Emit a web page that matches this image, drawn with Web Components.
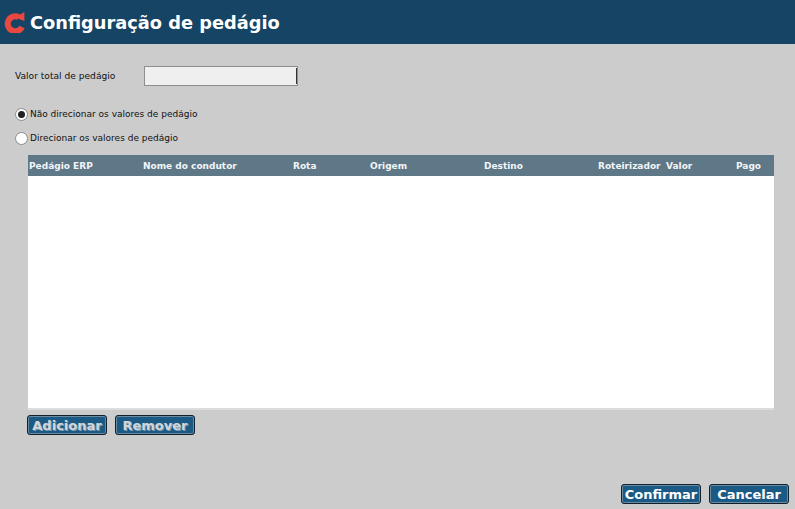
<!DOCTYPE html>
<html lang="pt">
<head>
<meta charset="utf-8">
<title>Configuração de pedágio</title>
<style>
    html, body { margin: 0; padding: 0; }
    body {
        width: 795px;
        height: 509px;
        overflow: hidden;
        background: #cccccc;
        font-family: "DejaVu Sans", Verdana, sans-serif;
        display: flex;
        flex-direction: column;
    }
    .form { flex: 1; display: flex; flex-direction: column; }
    .footer { display: flex; justify-content: flex-end; gap: 8px; padding: 0 6px 5px 0; margin-top: auto; }
    .actions { display: flex; gap: 8px; padding: 5px 0 0 27px; }
</style>
</head>
<body>
<app-header>Configuração de pedágio</app-header>
<div class="form">
    <total-field label="Valor total de pedágio"></total-field>
    <radio-option checked style="margin-top:20px">Não direcionar os valores de pedágio</radio-option>
    <radio-option style="margin-top:8px">Direcionar os valores de pedágio</radio-option>
    <toll-table></toll-table>
    <div class="actions">
        <app-button disabled>Adicionar</app-button>
        <app-button disabled>Remover</app-button>
    </div>
    <div class="footer">
        <app-button>Confirmar</app-button>
        <app-button>Cancelar</app-button>
    </div>
</div>

<template id="header-tpl">
    <style>
        :host {
            display: flex;
            align-items: center;
            gap: 5px;
            height: 44px;
            padding-left: 3px;
            background: #164464;
            color: #fff;
            font-size: 17.8px;
            font-weight: bold;
        }
        svg { width: 22px; height: 22px; flex: none; }
    </style>
    <svg viewBox="0 0 22 22">
        <path d="M15.5 6 A7.5 7.5 0 1 0 19 16" fill="none" stroke="#e8483f" stroke-width="6"/>
        <path d="M21.4 1 L21.4 10 L12 6.4 Z" fill="#e8483f"/>
    </svg>
    <slot></slot>
</template>

<template id="field-tpl">
    <style>
        :host {
            display: flex;
            align-items: center;
            padding: 22px 0 0 15px;
            font-size: 9.1px;
            color: #111;
        }
        span { width: 129px; }
        .box {
            position: relative;
            width: 152px;
            height: 18px;
            background: #efefef;
            border: 1px solid #8f8f8f;
        }
        .box::after {
            content: "";
            position: absolute;
            top: 1px;
            bottom: 1px;
            right: 0;
            width: 1px;
            background: #333;
        }
    </style>
    <span></span><div class="box"></div>
</template>

<template id="radio-tpl">
    <style>
        :host {
            display: flex;
            align-items: center;
            gap: 2px;
            height: 16px;
            padding-left: 15px;
            font-size: 9px;
            color: #111;
        }
        i {
            width: 11px;
            height: 11px;
            border-radius: 50%;
            background: #fff;
            border: 1px solid #8a8a8a;
            display: grid;
            place-items: center;
            flex: none;
        }
        :host([checked]) i::after {
            content: "";
            width: 7px;
            height: 7px;
            border-radius: 50%;
            background: #222;
        }
    </style>
    <i></i><slot></slot>
</template>

<template id="table-tpl">
    <style>
        :host {
            display: flex;
            flex-direction: column;
            margin: 9px 21px 0 28px;
            height: 255px;
            background: #fff;
            border-bottom: 2px solid #ddd;
            box-sizing: border-box;
        }
        .head {
            display: grid;
            grid-template-columns: 114px 150px 77px 114px 114px 68px 70px 1fr;
            align-items: center;
            height: 21px;
            padding-left: 1px;
            background: #5f7887;
            color: #f2f5f7;
            font-size: 9px;
            font-weight: bold;
            white-space: nowrap;
        }
    </style>
    <div class="head">
        <span>Pedágio ERP</span>
        <span>Nome do condutor</span>
        <span>Rota</span>
        <span>Origem</span>
        <span>Destino</span>
        <span>Roteirizador</span>
        <span>Valor</span>
        <span>Pago</span>
    </div>
</template>

<template id="button-tpl">
    <style>
        :host {
            display: inline-flex;
            align-items: center;
            justify-content: center;
            box-sizing: border-box;
            width: 80px;
            height: 20px;
            background: #1c5a86;
            border: 1px solid #10202c;
            border-radius: 3px;
            box-shadow: inset 0 0 0 1px #6d8ba0;
            color: #fff;
            font-size: 13px;
            font-weight: bold;
        }
        :host([disabled]) { color: #d0d6da; text-shadow: 1px 1px 0 #7f9aad; }
    </style>
    <slot></slot>
</template>

<script>
    function mount(el, id) {
        el.attachShadow({ mode: "open" });
        el.shadowRoot.appendChild(document.getElementById(id).content.cloneNode(true));
    }

    class AppHeader extends HTMLElement {
        constructor() { super(); mount(this, "header-tpl"); }
    }
    class TotalField extends HTMLElement {
        constructor() { super(); mount(this, "field-tpl"); }
        connectedCallback() {
            this.shadowRoot.querySelector("span").textContent = this.getAttribute("label");
        }
    }
    class RadioOption extends HTMLElement {
        constructor() { super(); mount(this, "radio-tpl"); }
    }
    class TollTable extends HTMLElement {
        constructor() { super(); mount(this, "table-tpl"); }
    }
    class AppButton extends HTMLElement {
        constructor() { super(); mount(this, "button-tpl"); }
    }

    customElements.define("app-header", AppHeader);
    customElements.define("total-field", TotalField);
    customElements.define("radio-option", RadioOption);
    customElements.define("toll-table", TollTable);
    customElements.define("app-button", AppButton);
</script>
</body>
</html>
